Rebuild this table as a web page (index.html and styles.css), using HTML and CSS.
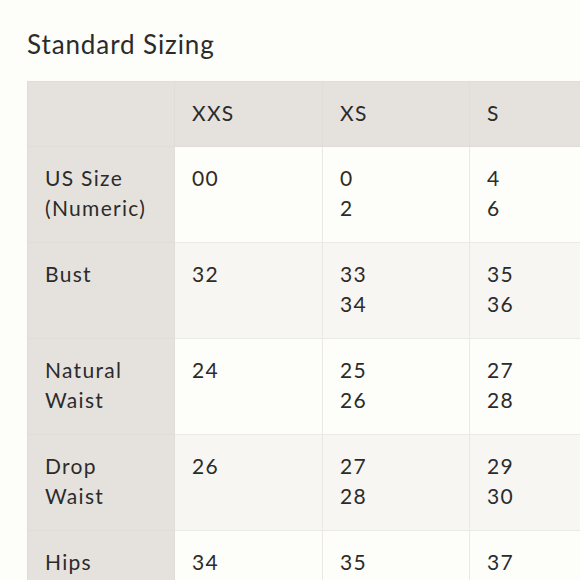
FILE: index.html
```html
<!DOCTYPE html>
<html>
<head>
<meta charset="utf-8">
<link rel="stylesheet" href="styles.css">
</head>
<body>
<div class="page">
  <h1 class="title">Standard Sizing</h1>
  <table class="sizes">
    <colgroup>
      <col class="c-label"><col class="c-xxs"><col class="c-size"><col class="c-size"><col class="c-size"><col class="c-size">
    </colgroup>
    <thead>
      <tr><th class="label"></th><th>XXS</th><th>XS</th><th>S</th><th>M</th><th>L</th></tr>
    </thead>
    <tbody>
      <tr><th class="label">US Size<br>(Numeric)</th><td>00</td><td>0<br>2</td><td>4<br>6</td><td>8<br>10</td><td>12<br>14</td></tr>
      <tr class="alt"><th class="label">Bust</th><td>32</td><td>33<br>34</td><td>35<br>36</td><td>37<br>38</td><td>39<br>40</td></tr>
      <tr><th class="label">Natural<br>Waist</th><td>24</td><td>25<br>26</td><td>27<br>28</td><td>29<br>30</td><td>31<br>32</td></tr>
      <tr class="alt"><th class="label">Drop<br>Waist</th><td>26</td><td>27<br>28</td><td>29<br>30</td><td>31<br>32</td><td>33<br>34</td></tr>
      <tr><th class="label">Hips</th><td>34</td><td>35<br>36</td><td>37<br>38</td><td>39<br>40</td><td>41<br>42</td></tr>
    </tbody>
  </table>
</div>
</body>
</html>
```
FILE: styles.css
```css
html, body {
  margin: 0;
  padding: 0;
  background: #fdfdf9;
  overflow: hidden;
  width: 580px;
  height: 580px;
}
.page {
  padding: 29px 0 0 27px;
  font-family: Lato, "Open Sans", sans-serif;
  color: #2b2b2b;
}
.title {
  margin: 0 0 22px 0;
  font-size: 26px;
  line-height: 30px;
  font-weight: 400;
  letter-spacing: 0.9px;
}
.sizes {
  border-collapse: collapse;
  table-layout: fixed;
  width: 737px;
  font-size: 21px;
  line-height: 30px;
  letter-spacing: 1.3px;
}
.c-label { width: 147px; }
.c-xxs { width: 148px; }
.c-size { width: 147px; }
.sizes th, .sizes td {
  text-align: left;
  vertical-align: top;
  font-weight: 400;
  padding: 16px 17px 19px 17px;
  border: 1px solid #ebe9e5;
}
.sizes thead th {
  background: #e5e2de;
  padding: 16px 17px 18px 17px;
  border-color: #e0ddd8;
}
.sizes th.label {
  background: #e5e2de;
  border-color: #e0ddd8;
}
.sizes tr.alt td {
  background: #f7f6f3;
}
.sizes tbody {
  background: #fdfdf9;
}
```
